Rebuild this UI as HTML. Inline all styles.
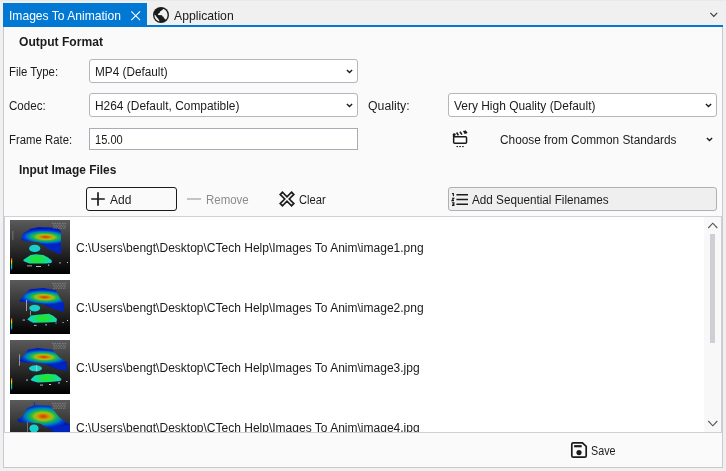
<!DOCTYPE html>
<html><head><meta charset="utf-8"><title>Images To Animation</title>
<style>
*{box-sizing:border-box;margin:0;padding:0}
html,body{width:726px;height:471px;overflow:hidden;background:#f0f0f0;font-family:"Liberation Sans",sans-serif;font-size:12px;color:#1b1b1b}
.a{position:absolute;white-space:nowrap}
.t{position:absolute;white-space:nowrap;line-height:16px;height:16px;transform-origin:0 50%}
.b{font-weight:bold}
.box{position:absolute;background:#fff;border:1px solid #b3b6bd;border-radius:3px}
svg{position:absolute;overflow:visible}
#clip{position:absolute;left:0;top:0;width:726px;height:432px;overflow:hidden}
#tab1{left:8.77px !important;transform:scaleX(0.9297) !important}
#tab2{left:174.40px !important;transform:scaleX(0.9386) !important}
#h1{left:19.05px !important;transform:scaleX(1.0072) !important}
#l1{left:9.19px !important;transform:scaleX(0.9473) !important}
#v1{left:95.26px !important;transform:scaleX(0.9814) !important}
#l2{left:8.92px !important;transform:scaleX(0.9644) !important}
#v2{left:94.86px !important;transform:scaleX(0.9931) !important}
#l3{left:367.69px !important;transform:scaleX(1.0242) !important}
#v3{left:454.20px !important;transform:scaleX(0.9958) !important}
#l4{left:9.19px !important;transform:scaleX(0.9462) !important}
#v4{left:94.51px !important;transform:scaleX(0.9241) !important}
#v5{left:499.61px !important;transform:scaleX(0.9871) !important}
#h2{left:18.96px !important;transform:scaleX(0.9928) !important}
#b1{left:110.40px !important;transform:scaleX(1.0024) !important}
#b2{left:205.75px !important;transform:scaleX(0.9549) !important}
#b3{left:298.93px !important;transform:scaleX(0.9321) !important}
#b4{left:472.20px !important;transform:scaleX(0.9760) !important}
#p1{left:75.70px !important;transform:scaleX(1.0010) !important}
#p2{left:75.70px !important;transform:scaleX(1.0010) !important}
#p3{left:75.70px !important;transform:scaleX(1.0010) !important}
#p4{left:75.70px !important;transform:scaleX(1.0010) !important}
#sv{left:590.95px !important;transform:scaleX(0.8943) !important}
</style></head><body>
<!-- tab strip -->
<div class="a" style="left:0;top:0;width:726px;height:1px;background:#e9e9e9"></div>
<div class="a" style="left:3px;top:3px;width:144px;height:23px;background:#0078d4"></div>
<div class="a" style="left:3px;top:25px;width:720px;height:2px;background:#0078d4"></div>
<div class="t" id="tab1" style="left:9px;top:8px;color:#fff;font-size:13px;transform:scaleX(.933)">Images To Animation</div>
<svg style="left:130.9px;top:11px" width="9.4" height="9.4" viewBox="0 0 9 9"><path d="M0.3 0.3 L8.7 8.7 M8.7 0.3 L0.3 8.7" stroke="#fff" stroke-width="1.1" fill="none"/></svg>
<svg id="globe" style="left:153px;top:7px" width="16" height="16" viewBox="0 0 16 16">
<defs><clipPath id="gc"><circle cx="8" cy="8" r="6.6"/></clipPath></defs>
<circle cx="8" cy="8" r="8" fill="#1b1b1b"/>
<g clip-path="url(#gc)" fill="#f0f0f0">
<polygon points="11.2,1 9,3.3 7,4.4 6.7,5.8 5.4,6.4 4.8,8 9,8.3 9.5,9.4 10.6,9.7 10.9,11 12.3,12.2 13,13 16,13 16,0 11,0"/>
<polygon points="0,7.5 2.1,7.8 3.6,10.1 5.4,12 6.4,14 6.8,16 0,16"/>
</g></svg>
<div class="t" id="tab2" style="left:174px;top:8px;font-size:13px;transform:scaleX(.935)">Application</div>
<svg style="left:710px;top:12.4px" width="8" height="6" viewBox="0 0 8 6"><path d="M0.4 0.8 L3.8 4.5 L7.2 0.8" stroke="#3c3c3c" stroke-width="1.15" fill="none"/></svg>

<!-- content panel -->
<div class="a" id="panel" style="left:3px;top:27px;width:720px;height:441px;background:#fafafa;border:1px solid #c9c9cf;border-top:none"></div>

<div class="t b" id="h1" style="left:19px;top:34px">Output Format</div>
<div class="t" id="l1" style="left:9px;top:64px">File Type:</div>
<div class="box" style="left:89px;top:59px;width:269px;height:24px"></div>
<div class="t" id="v1" style="left:95px;top:64px">MP4 (Default)</div>
<svg class="chev" style="left:346px;top:69px" width="7" height="5" viewBox="0 0 7 5"><path d="M0.9 1 L3.5 3.5 L6.1 1" stroke="#1b1b1b" stroke-width="1.4" fill="none"/></svg>

<div class="t" id="l2" style="left:9px;top:98px">Codec:</div>
<div class="box" style="left:89px;top:93px;width:269px;height:24px"></div>
<div class="t" id="v2" style="left:95px;top:98px">H264 (Default, Compatible)</div>
<svg class="chev" style="left:346px;top:103px" width="7" height="5" viewBox="0 0 7 5"><path d="M0.9 1 L3.5 3.5 L6.1 1" stroke="#1b1b1b" stroke-width="1.4" fill="none"/></svg>
<div class="t" id="l3" style="left:368px;top:98px">Quality:</div>
<div class="box" style="left:448px;top:93px;width:269px;height:24px"></div>
<div class="t" id="v3" style="left:454px;top:98px">Very High Quality (Default)</div>
<svg class="chev" style="left:705px;top:103px" width="7" height="5" viewBox="0 0 7 5"><path d="M0.9 1 L3.5 3.5 L6.1 1" stroke="#1b1b1b" stroke-width="1.4" fill="none"/></svg>

<div class="t" id="l4" style="left:9px;top:132px">Frame Rate:</div>
<div class="box" style="left:89px;top:128px;width:269px;height:22px;border-color:#a9acb4;border-radius:0"></div>
<div class="t" id="v4" style="left:95px;top:132px">15.00</div>
<!-- clapper icon -->
<svg id="clap" style="left:452px;top:130px" width="16" height="18" viewBox="0 0 16 18">
<rect x="1.65" y="6.75" width="12.9" height="6.5" rx="1" fill="#fdfdfd" stroke="#1b1b1b" stroke-width="1.5"/>
<path d="M1.6 7 V4.2" stroke="#1b1b1b" stroke-width="1.5"/>
<circle cx="2.3" cy="4.6" r="1.4" fill="#1b1b1b"/>
<path d="M4.6 2.5 L6.4 5.4 M8.0 1.7 L9.9 4.6 M11.6 0.9 L13.5 3.7 M13.0 0.7 L14.9 3.3" stroke="#1b1b1b" stroke-width="1.6"/>
<rect x="4.5" y="16" width="1.6" height="1.1" fill="#1b1b1b"/><rect x="7.3" y="16" width="1.6" height="1.1" fill="#1b1b1b"/><rect x="10.1" y="16" width="1.6" height="1.1" fill="#1b1b1b"/>
</svg>
<div class="t" id="v5" style="left:500px;top:132px">Choose from Common Standards</div>
<svg class="chev" style="left:706px;top:137px" width="7" height="5" viewBox="0 0 7 5"><path d="M0.9 1 L3.5 3.5 L6.1 1" stroke="#1b1b1b" stroke-width="1.4" fill="none"/></svg>

<div class="t b" id="h2" style="left:19px;top:162px">Input Image Files</div>

<div class="a" style="left:86px;top:187px;width:91px;height:24px;border:1px solid #1b1b1b;border-radius:3px;background:#fafafa"></div>
<svg style="left:91px;top:192px" width="14" height="14" viewBox="0 0 14 14"><path d="M7 0.2 V13.8 M0.2 7 H13.8" stroke="#1b1b1b" stroke-width="1.7" fill="none"/></svg>
<div class="t" id="b1" style="left:110px;top:192px">Add</div>
<div class="a" style="left:187px;top:198px;width:14px;height:2px;background:#c4c4c4"></div>
<div class="t" id="b2" style="left:206px;top:192px;color:#8c8c8c">Remove</div>
<svg id="xic" style="left:279px;top:191px" width="16" height="16" viewBox="-8 -8 16 16"><path transform="rotate(45)" d="M-1.6 -8.05 H1.6 V-1.6 H8.05 V1.6 H1.6 V8.05 H-1.6 V1.6 H-8.05 V-1.6 H-1.6 Z" fill="none" stroke="#1b1b1b" stroke-width="1.65" stroke-linejoin="miter"/></svg>
<div class="t" id="b3" style="left:299px;top:192px">Clear</div>
<div class="a" style="left:448px;top:187px;width:269px;height:24px;border:1px solid #adb0b8;border-radius:3px;background:#efefef"></div>
<svg id="nl" style="left:451px;top:192px" width="18" height="14" viewBox="0 0 18 14">
<path d="M5.4 2.7 H17 M5.4 7.4 H17 M5.4 12.2 H17" stroke="#1b1b1b" stroke-width="1.5" fill="none"/>
<path d="M1 1.6 H2.4 V4.2 M1 6.2 H2.8 L1 8.6 H3 M1 10.8 H2.9 V13.4 H1 M1.6 12.1 H2.9" stroke="#1b1b1b" stroke-width="1.1" fill="none"/>
</svg>
<div class="t" id="b4" style="left:472px;top:192px">Add Sequential Filenames</div>

<!-- list -->
<div class="a" id="list" style="left:4px;top:216px;width:718px;height:217px;background:#fff;border:1px solid #d0d0d6"></div>
<div class="a" style="left:704px;top:217px;width:17px;height:215px;background:#f8f8f8"></div>
<svg style="left:708px;top:222px" width="10" height="7" viewBox="0 0 10 7"><path d="M0.3 6 L4.8 1.2 L9.3 6" stroke="#555" stroke-width="1.1" fill="none"/></svg>
<div class="a" style="left:710px;top:234px;width:5px;height:109px;background:#cdcfd4"></div>
<svg style="left:708px;top:420px" width="10" height="7" viewBox="0 0 10 7"><path d="M0.3 1 L4.8 5.8 L9.3 1" stroke="#555" stroke-width="1.1" fill="none"/></svg>
<div id="clip">
<svg style="left:10px;top:220px" width="60" height="54" viewBox="0 0 60 54">
<defs>
<linearGradient id="bg1" x1="0" y1="0" x2="0" y2="1"><stop offset="0" stop-color="#5a5a5a"/><stop offset="0.55" stop-color="#2a2a2a"/><stop offset="1" stop-color="#000"/></linearGradient>
<radialGradient id="hot1" gradientUnits="userSpaceOnUse" cx="35.5" cy="17" r="27" gradientTransform="translate(35.5 17) rotate(2) scale(1 0.3) translate(-35.5 -17)">
<stop offset="0" stop-color="#cc4000"/><stop offset="0.12" stop-color="#d46800"/><stop offset="0.22" stop-color="#cc9c08"/><stop offset="0.33" stop-color="#9cc018"/><stop offset="0.44" stop-color="#30b840"/><stop offset="0.55" stop-color="#00a880"/><stop offset="0.66" stop-color="#0080c0"/><stop offset="0.8" stop-color="#0040d0"/><stop offset="1" stop-color="#0018b8"/></radialGradient>
<radialGradient id="gr1" gradientUnits="userSpaceOnUse" cx="27" cy="39.5" r="16" gradientTransform="translate(27 39.5) scale(1 0.45) translate(-27 -39.5)">
<stop offset="0" stop-color="#28e818"/><stop offset="0.45" stop-color="#18e060"/><stop offset="0.8" stop-color="#10d8b8"/><stop offset="1" stop-color="#18c8e0"/></radialGradient>
<linearGradient id="lg1" x1="0" y1="0" x2="0" y2="1"><stop offset="0" stop-color="#f02000"/><stop offset="0.3" stop-color="#f0e000"/><stop offset="0.55" stop-color="#20e020"/><stop offset="0.8" stop-color="#00c0e0"/><stop offset="1" stop-color="#0020e0"/></linearGradient>
<filter id="bl1" x="-10%" y="-10%" width="120%" height="120%"><feGaussianBlur stdDeviation="0.45"/></filter>
</defs>
<rect width="60" height="54" fill="url(#bg1)"/>
<g filter="url(#bl1)">
<polygon points="11.3,20 12.6,13.8 20.6,8.8 28.7,6.9 40,7.6 48.2,8.6 51,11.5 51,33.3 47,32.5 34.4,25.8 28.7,22.3 16.4,21.3" fill="url(#hot1)"/>
<polygon points="33,25 51.1,24 51.1,33.9 47.2,33.2 38,29" fill="#0028c0" opacity="0.85"/>
<ellipse cx="24.7" cy="28.4" rx="5.6" ry="3.7" fill="#18d0d0"/>
<polygon points="13.2,40 20.6,35 26,34.3 33.3,35 38,37.5 42,40.7 41.3,43 36,43.6 19.5,43.4 13.8,41.3" fill="url(#gr1)"/>
<rect x="1" y="38" width="1.2" height="12" fill="url(#lg1)"/>
<g fill="#cfcfcf">
<path d="M42 3.4 H57 M43 5.2 H56 M44 6.8 H56 M43 8.3 H56" stroke="#d8d8d8" stroke-width="0.8" stroke-dasharray="1.6 0.9" opacity=".42" fill="none"/>
<rect x="2.5" y="11" width="0.7" height="9" opacity=".5"/><rect x="17" y="45.5" width="5" height="0.8"/><rect x="26" y="46" width="5" height="0.9"/><rect x="38" y="44.5" width="1.2" height="1.2"/><rect x="49" y="42.5" width="2" height="0.8"/><rect x="57" y="42" width="1" height="1"/>
</g>
</g>
</svg><svg style="left:10px;top:280px" width="60" height="54" viewBox="0 0 60 54">
<defs>
<linearGradient id="bg2" x1="0" y1="0" x2="0" y2="1"><stop offset="0" stop-color="#5a5a5a"/><stop offset="0.55" stop-color="#2a2a2a"/><stop offset="1" stop-color="#000"/></linearGradient>
<radialGradient id="hot2" gradientUnits="userSpaceOnUse" cx="34.4" cy="17.2" r="27" gradientTransform="translate(34.4 17.2) rotate(2) scale(1 0.3) translate(-34.4 -17.2)">
<stop offset="0" stop-color="#cc4000"/><stop offset="0.12" stop-color="#d46800"/><stop offset="0.22" stop-color="#cc9c08"/><stop offset="0.33" stop-color="#9cc018"/><stop offset="0.44" stop-color="#30b840"/><stop offset="0.55" stop-color="#00a880"/><stop offset="0.66" stop-color="#0080c0"/><stop offset="0.8" stop-color="#0040d0"/><stop offset="1" stop-color="#0018b8"/></radialGradient>
<radialGradient id="gr2" gradientUnits="userSpaceOnUse" cx="33.3" cy="38.4" r="16" gradientTransform="translate(33.3 38.4) scale(1 0.45) translate(-33.3 -38.4)">
<stop offset="0" stop-color="#28e818"/><stop offset="0.45" stop-color="#18e060"/><stop offset="0.8" stop-color="#10d8b8"/><stop offset="1" stop-color="#18c8e0"/></radialGradient>
<linearGradient id="lg2" x1="0" y1="0" x2="0" y2="1"><stop offset="0" stop-color="#f02000"/><stop offset="0.3" stop-color="#f0e000"/><stop offset="0.55" stop-color="#20e020"/><stop offset="0.8" stop-color="#00c0e0"/><stop offset="1" stop-color="#0020e0"/></linearGradient>
<filter id="bl2" x="-10%" y="-10%" width="120%" height="120%"><feGaussianBlur stdDeviation="0.45"/></filter>
</defs>
<rect width="60" height="54" fill="url(#bg2)"/>
<g filter="url(#bl2)">
<polygon points="9.2,21.2 13.2,15.5 20,9.2 33.3,8 45.9,10.3 50.5,18.9 53.9,22.9 53.9,31.5 45.9,29.8 36.7,25.8 31,23.5 17.2,22.4" fill="url(#hot2)"/>
<polygon points="36.7,24.9 53.9,22.9 53.9,31.5 45.9,29.8" fill="#0028c0" opacity="0.85"/>
<ellipse cx="24.7" cy="28.1" rx="5.5" ry="3.4" fill="#18d0d0"/>
<polygon points="17.2,39.6 21.2,35.6 30,34.4 39,33.8 43.5,36 47,39 46.4,41.9 36,42.5 22.9,42.7" fill="url(#gr2)"/>
<rect x="1" y="38" width="1.2" height="12" fill="url(#lg2)"/>
<g fill="#cfcfcf">
<path d="M42 3.4 H57 M43 5.2 H56 M44 6.8 H56 M43 8.3 H56" stroke="#d8d8d8" stroke-width="0.8" stroke-dasharray="1.6 0.9" opacity=".42" fill="none"/>
<rect x="16" y="20" width="0.9" height="11" opacity=".8"/><rect x="20" y="31" width="0.9" height="4.5" opacity=".7"/><rect x="12.6" y="39.6" width="2.4" height="0.9"/><rect x="24" y="44.9" width="2.6" height="0.9"/><rect x="35.4" y="44.2" width="1.4" height="1.2"/><rect x="45.5" y="42.6" width="1" height="1"/><rect x="52.5" y="42" width="1.2" height="0.9"/><rect x="57" y="40" width="1" height="1"/>
</g>
</g>
</svg><svg style="left:10px;top:340px" width="60" height="54" viewBox="0 0 60 54">
<defs>
<linearGradient id="bg3" x1="0" y1="0" x2="0" y2="1"><stop offset="0" stop-color="#5a5a5a"/><stop offset="0.55" stop-color="#2a2a2a"/><stop offset="1" stop-color="#000"/></linearGradient>
<radialGradient id="hot3" gradientUnits="userSpaceOnUse" cx="33.8" cy="17" r="27" gradientTransform="translate(33.8 17) rotate(2) scale(1 0.3) translate(-33.8 -17)">
<stop offset="0" stop-color="#cc4000"/><stop offset="0.12" stop-color="#d46800"/><stop offset="0.22" stop-color="#cc9c08"/><stop offset="0.33" stop-color="#9cc018"/><stop offset="0.44" stop-color="#30b840"/><stop offset="0.55" stop-color="#00a880"/><stop offset="0.66" stop-color="#0080c0"/><stop offset="0.8" stop-color="#0040d0"/><stop offset="1" stop-color="#0018b8"/></radialGradient>
<radialGradient id="gr3" gradientUnits="userSpaceOnUse" cx="36.7" cy="37.8" r="16" gradientTransform="translate(36.7 37.8) scale(1 0.45) translate(-36.7 -37.8)">
<stop offset="0" stop-color="#28e818"/><stop offset="0.45" stop-color="#18e060"/><stop offset="0.8" stop-color="#10d8b8"/><stop offset="1" stop-color="#18c8e0"/></radialGradient>
<linearGradient id="lg3" x1="0" y1="0" x2="0" y2="1"><stop offset="0" stop-color="#f02000"/><stop offset="0.3" stop-color="#f0e000"/><stop offset="0.55" stop-color="#20e020"/><stop offset="0.8" stop-color="#00c0e0"/><stop offset="1" stop-color="#0020e0"/></linearGradient>
<filter id="bl3" x="-10%" y="-10%" width="120%" height="120%"><feGaussianBlur stdDeviation="0.45"/></filter>
</defs>
<rect width="60" height="54" fill="url(#bg3)"/>
<g filter="url(#bl3)">
<polygon points="8,20.6 13.8,15.5 17.8,9.7 27.5,8 42.4,9.7 49.3,17.2 56.8,22.4 56.8,30.4 48.2,29.2 39,25.8 31,22.9 14.9,22.4" fill="url(#hot3)"/>
<polygon points="39,24.9 56.8,22.4 56.8,30.4 48.2,29.2" fill="#0028c0" opacity="0.85"/>
<ellipse cx="25.5" cy="28.3" rx="6.5" ry="3" fill="#18d0d0"/>
<polygon points="20.6,39.6 24.7,35.6 31,34.4 37.8,33.8 45.9,34.4 51.6,39 50.5,41 40,42 27.5,42.4 21.8,40.7" fill="url(#gr3)"/>
<rect x="1" y="38" width="1.2" height="12" fill="url(#lg3)"/>
<g fill="#cfcfcf">
<path d="M42 3.4 H57 M43 5.2 H56 M44 6.8 H56 M43 8.3 H56" stroke="#d8d8d8" stroke-width="0.8" stroke-dasharray="1.6 0.9" opacity=".42" fill="none"/>
<rect x="9.1" y="14.3" width="0.9" height="11.5" opacity=".7"/><rect x="26.2" y="25.2" width="0.9" height="6.3" opacity=".8"/><rect x="16" y="39.6" width="2" height="0.9"/><rect x="30" y="44.6" width="3" height="0.9"/><rect x="39" y="44" width="2" height="1"/><rect x="48" y="42.5" width="2" height="0.9"/><rect x="56" y="41" width="1.5" height="0.9"/>
</g>
</g>
</svg><svg style="left:10px;top:400px" width="60" height="54" viewBox="0 0 60 54">
<defs>
<linearGradient id="bg4" x1="0" y1="0" x2="0" y2="1"><stop offset="0" stop-color="#5a5a5a"/><stop offset="0.55" stop-color="#2a2a2a"/><stop offset="1" stop-color="#000"/></linearGradient>
<radialGradient id="hot4" gradientUnits="userSpaceOnUse" cx="33.3" cy="16.4" r="27" gradientTransform="translate(33.3 16.4) rotate(2) scale(1 0.46) translate(-33.3 -16.4)">
<stop offset="0" stop-color="#cc4000"/><stop offset="0.12" stop-color="#d46800"/><stop offset="0.22" stop-color="#cc9c08"/><stop offset="0.33" stop-color="#9cc018"/><stop offset="0.44" stop-color="#30b840"/><stop offset="0.55" stop-color="#00a880"/><stop offset="0.66" stop-color="#0080c0"/><stop offset="0.8" stop-color="#0040d0"/><stop offset="1" stop-color="#0018b8"/></radialGradient>
<radialGradient id="gr4" gradientUnits="userSpaceOnUse" cx="36" cy="50" r="16" gradientTransform="translate(36 50) scale(1 0.45) translate(-36 -50)">
<stop offset="0" stop-color="#28e818"/><stop offset="0.45" stop-color="#18e060"/><stop offset="0.8" stop-color="#10d8b8"/><stop offset="1" stop-color="#18c8e0"/></radialGradient>
<linearGradient id="lg4" x1="0" y1="0" x2="0" y2="1"><stop offset="0" stop-color="#f02000"/><stop offset="0.3" stop-color="#f0e000"/><stop offset="0.55" stop-color="#20e020"/><stop offset="0.8" stop-color="#00c0e0"/><stop offset="1" stop-color="#0020e0"/></linearGradient>
<filter id="bl4" x="-10%" y="-10%" width="120%" height="120%"><feGaussianBlur stdDeviation="0.45"/></filter>
</defs>
<rect width="60" height="54" fill="url(#bg4)"/>
<g filter="url(#bl4)">
<polygon points="6.9,20 12.6,16.6 17.2,8 24.7,5.2 40.1,5.7 49.3,17.2 59.6,24.7 59.6,33 46,33 37.8,28.1 29.8,23.5 19.5,22.4 10.3,22.4" fill="url(#hot4)"/>
<polygon points="37.8,27.5 59.6,24.7 59.6,33 46,33" fill="#0028c0" opacity="0.85"/>
<ellipse cx="24" cy="28.4" rx="4.6" ry="4" fill="#18d0d0"/>
<polygon points="21.5,49.5 25,46 31,44.5 40,44 47,46 51.5,50 50,52.5" fill="url(#gr4)"/>
<rect x="1" y="48" width="1.2" height="12" fill="url(#lg4)"/>
<g fill="#cfcfcf">
<path d="M42 3.4 H57 M43 5.2 H56 M44 6.8 H56 M43 8.3 H56" stroke="#d8d8d8" stroke-width="0.8" stroke-dasharray="1.6 0.9" opacity=".42" fill="none"/>
<rect x="17" y="22" width="0.8" height="10" opacity=".5"/><rect x="23.9" y="2.2" width="0.9" height="3.2" fill="#0030d0"/>
</g>
</g>
</svg>
<div class="t" id="p1" style="left:76px;top:240px">C:\Users\bengt\Desktop\CTech Help\Images To Anim\image1.png</div>
<div class="t" id="p2" style="left:76px;top:300px">C:\Users\bengt\Desktop\CTech Help\Images To Anim\image2.png</div>
<div class="t" id="p3" style="left:76px;top:360px">C:\Users\bengt\Desktop\CTech Help\Images To Anim\image3.jpg</div>
<div class="t" id="p4" style="left:76px;top:420px">C:\Users\bengt\Desktop\CTech Help\Images To Anim\image4.jpg</div>
</div>

<!-- bottom -->
<svg id="save" style="left:571px;top:442px" width="16" height="16" viewBox="0 0 16 16">
<path d="M2.2 0.8 H11.4 L15.2 4.4 V13.8 Q15.2 15.2 13.8 15.2 H2.2 Q0.8 15.2 0.8 13.8 V2.2 Q0.8 0.8 2.2 0.8 Z" fill="none" stroke="#1b1b1b" stroke-width="1.7"/>
<rect x="3.1" y="3.1" width="7.6" height="2.2" fill="#1b1b1b"/>
<circle cx="8" cy="10.6" r="2.6" fill="#1b1b1b"/>
</svg>
<div class="t" id="sv" style="left:591px;top:443px">Save</div>
</body></html>
